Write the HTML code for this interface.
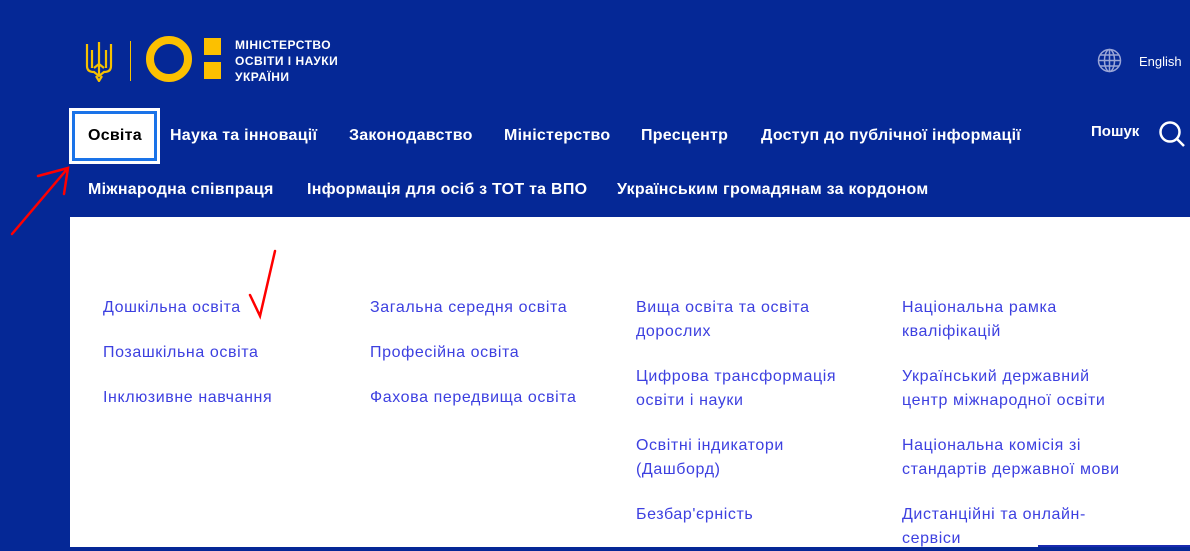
<!DOCTYPE html>
<html><head><meta charset="utf-8"><style>
body{margin:0;width:1190px;height:547px;overflow:hidden;background:#052896;font-family:"Liberation Sans","DejaVu Sans",sans-serif;position:relative}
.a{position:absolute;white-space:nowrap}
.nav{color:#fff;font-weight:bold;font-size:16px;letter-spacing:0.25px}
.l{color:#3d40e0;font-size:16px;line-height:24px;letter-spacing:0.6px}
</style></head><body>
<svg class="a" style="left:84px;top:40px" width="30" height="42" viewBox="0 0 30 42"><g fill="none" stroke="#f6c100" stroke-width="2.2"><path d="M15 2 L15 36 M3 4 L3 26 Q3 32 10 32 L15 36 L20 32 Q27 32 27 26 L27 4 M8 10 L8 28 M22 10 L22 28 M15 24 L10 28 M15 24 L20 28 M12 36 L15 41 L18 36"/></g></svg>
<div class="a" style="left:130px;top:41px;width:1px;height:40px;background:#f6c100"></div>
<div class="a" style="left:146px;top:36px;border:8px solid #fcc000;border-radius:50%;box-sizing:border-box;width:46px;height:46px"></div>
<div class="a" style="left:204px;top:38px;width:17px;height:17px;background:#fcc000"></div>
<div class="a" style="left:204px;top:62px;width:17px;height:17px;background:#fcc000"></div>
<div class="a" style="left:235px;top:37px;color:#fff;font-weight:bold;font-size:12px;line-height:16px;letter-spacing:0.5px">МІНІСТЕРСТВО<br>ОСВІТИ І НАУКИ<br>УКРАЇНИ</div>
<svg class="a" style="left:1097px;top:48px" width="25" height="25" viewBox="0 0 25 25"><g fill="none" stroke="#9aa5d6" stroke-width="1.5"><circle cx="12.5" cy="12.5" r="11"/><ellipse cx="12.5" cy="12.5" rx="5" ry="11"/><path d="M1.5 12.5H23.5M12.5 1.5V23.5M3.5 7H21.5M3.5 18H21.5"/></g></svg>
<div class="a" style="left:1139px;top:54px;color:#fff;font-size:13px">English</div>
<div class="a" style="left:69px;top:108px;width:91px;height:56px;background:#fff;border:2px solid #fff;box-sizing:border-box"><div style="position:absolute;left:1px;top:1px;right:1px;bottom:1px;border:3px solid #1a73e8"></div></div>
<div class="a nav" style="left:88px;top:127px;color:#000">Освіта</div>
<div class="a nav" style="left:170px;top:127px">Наука та інновації</div>
<div class="a nav" style="left:349px;top:127px">Законодавство</div>
<div class="a nav" style="left:504px;top:127px">Міністерство</div>
<div class="a nav" style="left:641px;top:127px">Пресцентр</div>
<div class="a nav" style="left:761px;top:127px">Доступ до публічної інформації</div>
<div class="a nav" style="left:1091px;top:123px;font-size:15px;letter-spacing:0">Пошук</div>
<svg class="a" style="left:1158px;top:120px" width="28" height="28" viewBox="0 0 28 28"><g fill="none" stroke="#fff" stroke-width="2.5"><circle cx="12" cy="12" r="9.5"/><path d="M19 19L26 26"/></g></svg>
<div class="a nav" style="left:88px;top:181px">Міжнародна співпраця</div>
<div class="a nav" style="left:307px;top:181px">Інформація для осіб з ТОТ та ВПО</div>
<div class="a nav" style="left:617px;top:181px">Українським громадянам за кордоном</div>
<div class="a" style="left:70px;top:217px;width:1120px;height:330px;background:#fff"></div>
<div class="a l" style="left:103px;top:296px">Дошкільна освіта</div>
<div class="a l" style="left:103px;top:341px">Позашкільна освіта</div>
<div class="a l" style="left:103px;top:386px">Інклюзивне навчання</div>
<div class="a l" style="left:370px;top:296px">Загальна середня освіта</div>
<div class="a l" style="left:370px;top:341px">Професійна освіта</div>
<div class="a l" style="left:370px;top:386px">Фахова передвища освіта</div>
<div class="a l" style="left:636px;top:296px">Вища освіта та освіта<br>дорослих</div>
<div class="a l" style="left:636px;top:365px">Цифрова трансформація<br>освіти і науки</div>
<div class="a l" style="left:636px;top:434px">Освітні індикатори<br>(Дашборд)</div>
<div class="a l" style="left:636px;top:503px">Безбар'єрність</div>
<div class="a l" style="left:902px;top:296px">Національна рамка<br>кваліфікацій</div>
<div class="a l" style="left:902px;top:365px">Український державний<br>центр міжнародної освіти</div>
<div class="a l" style="left:902px;top:434px">Національна комісія зі<br>стандартів державної мови</div>
<div class="a l" style="left:902px;top:503px">Дистанційні та онлайн-<br>сервіси</div>
<div class="a" style="left:1038px;top:545px;width:152px;height:2px;background:#1a2bb0"></div>
<svg class="a" style="left:0;top:0" width="1190" height="547"><g fill="none" stroke="#f00" stroke-width="2.5" stroke-linecap="round"><path d="M12 234L68 168M38 176L68 168L64 194"/><path d="M250 295L260 316L275 251"/></g></svg>
</body></html>
